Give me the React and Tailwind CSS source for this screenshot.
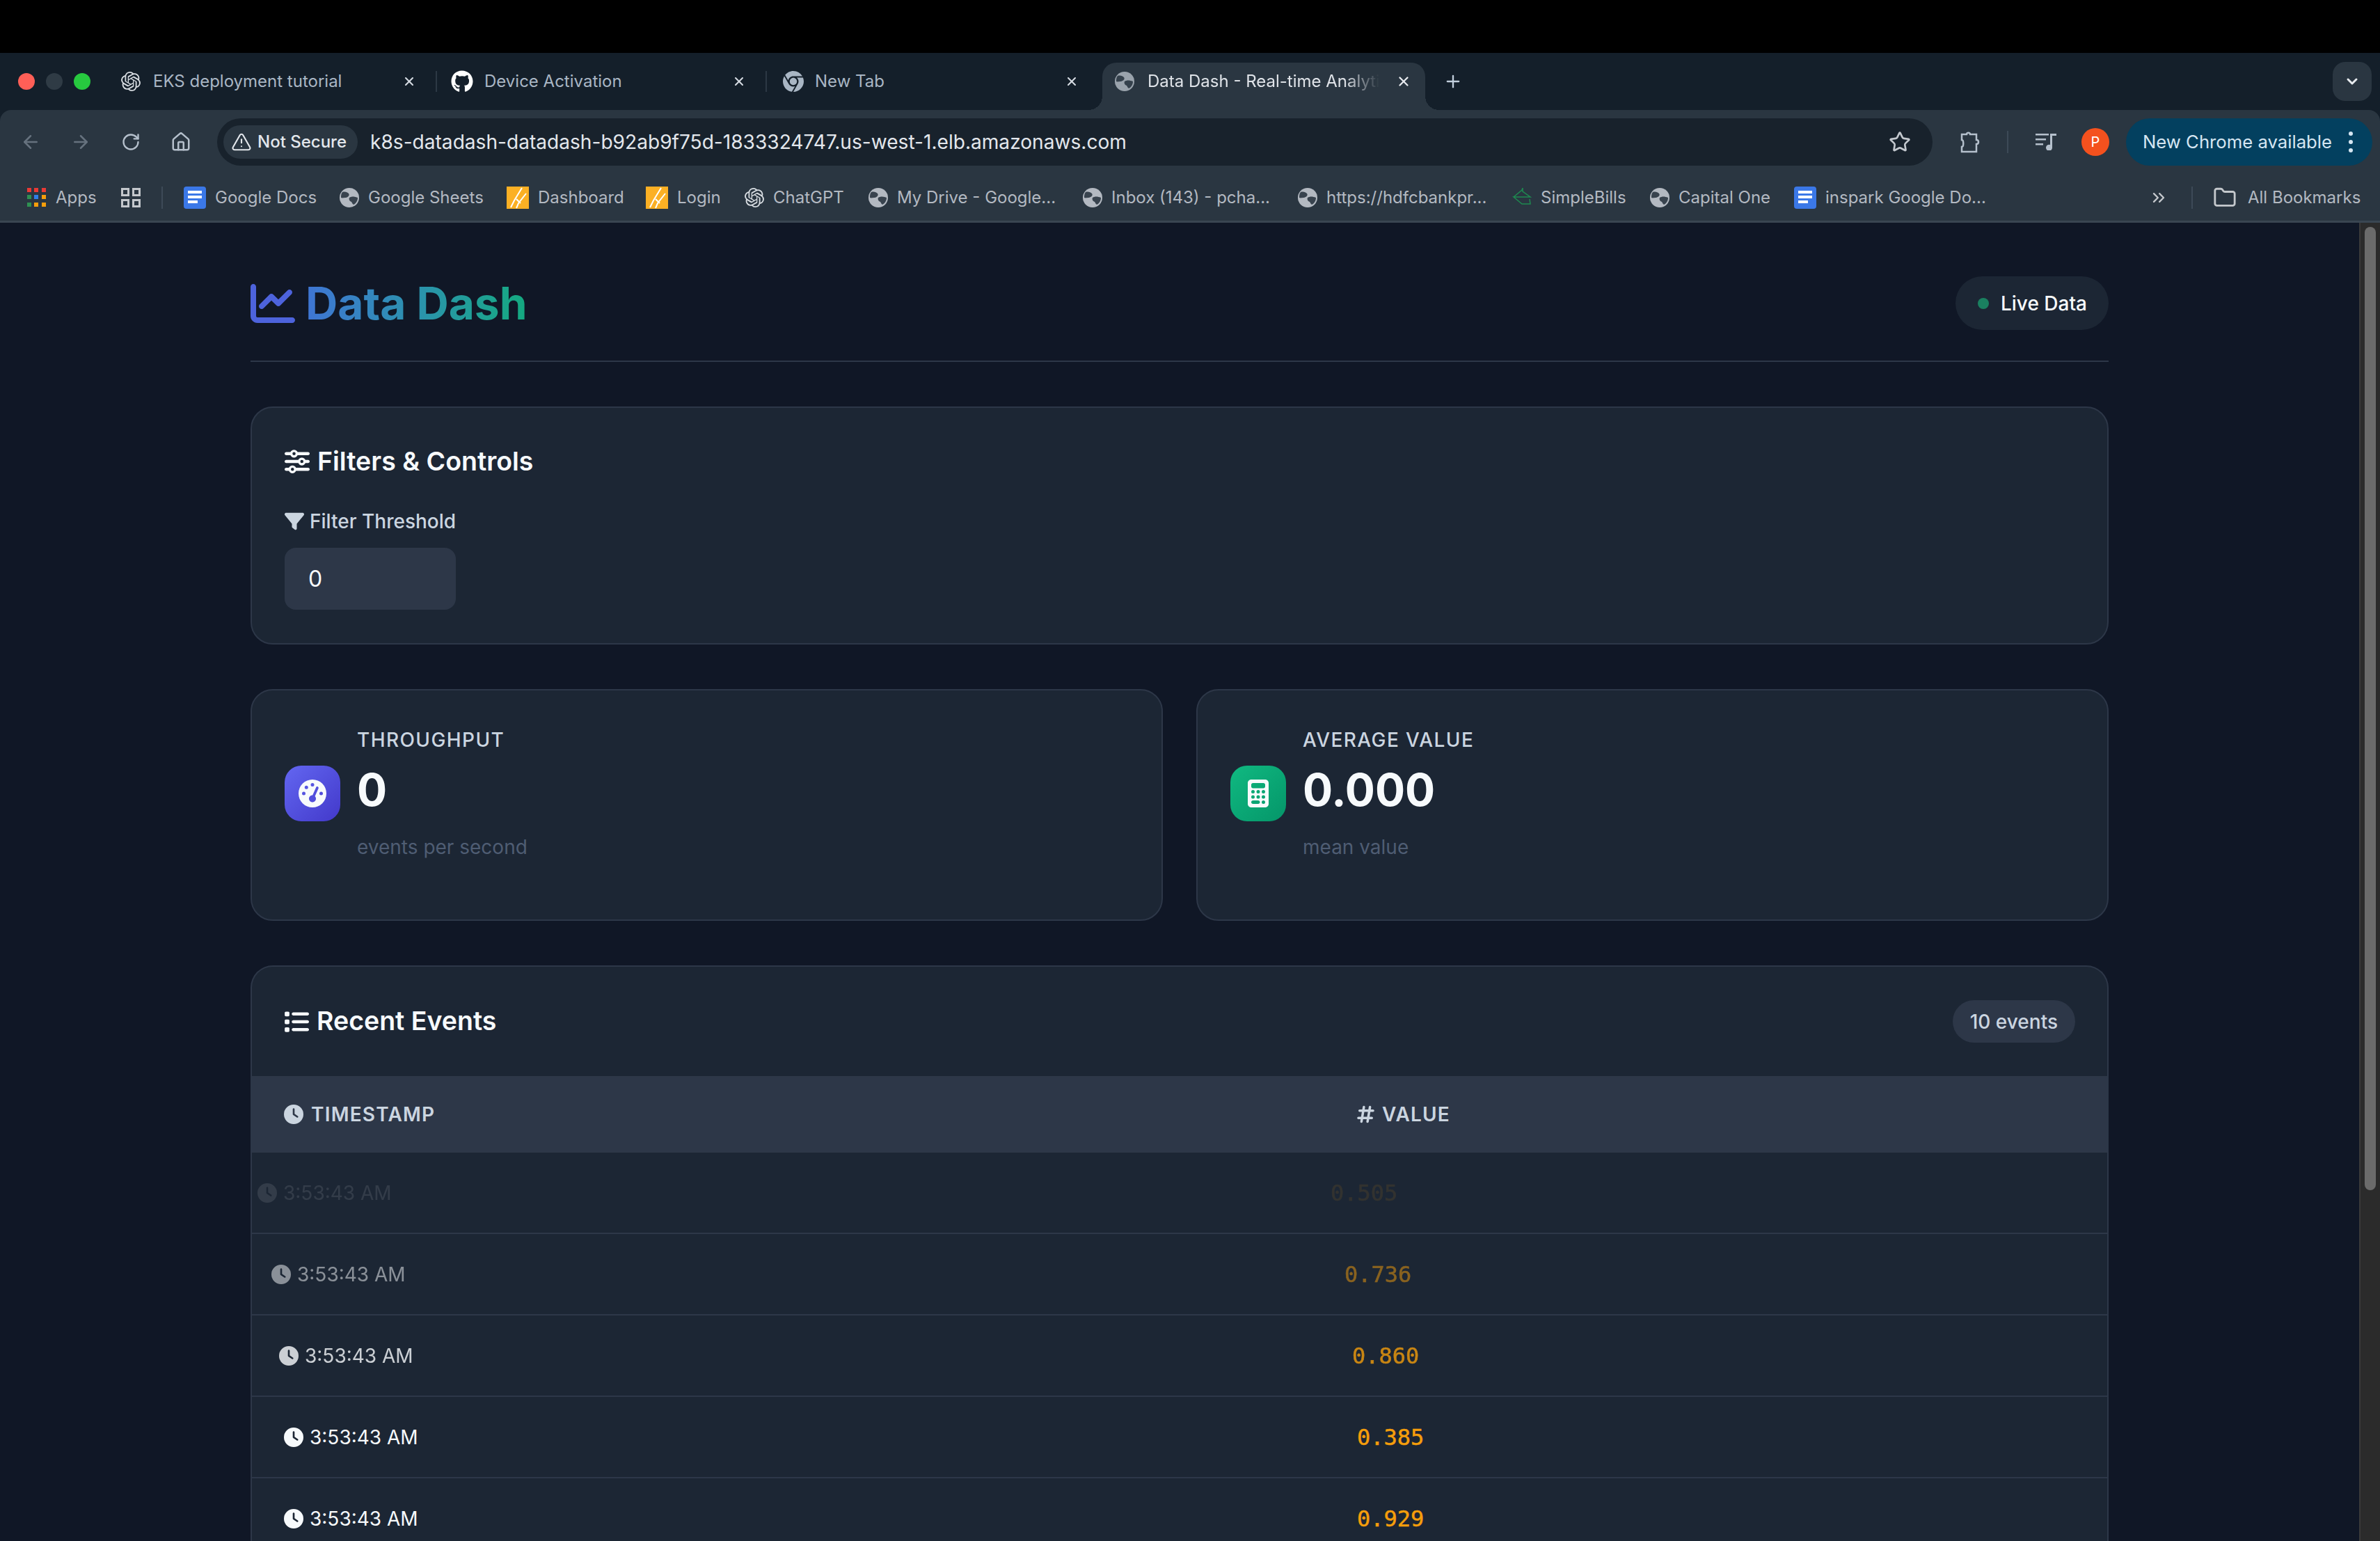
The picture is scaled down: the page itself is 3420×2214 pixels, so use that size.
import { ArrowLeft, ArrowRight, ChevronDown, ChevronsRight, Folder, House, Plus, RotateCw, Star, TriangleAlert, X } from 'lucide-react'
import { FaCalculator, FaChartLine, FaChrome, FaClock, FaFilter, FaGaugeHigh, FaGithub, FaHashtag, FaList, FaSliders } from 'react-icons/fa6'
import { SiOpenai } from 'react-icons/si'

function Globe({ className }) {
  return (
    <svg viewBox="0 0 28 28" className={className}>
      <circle cx="14" cy="14" r="14" fill="currentColor" />
      <path d="M4 6c4-1 7 0 9 2 2 3-1 5-4 6-3 0-5 1-7 0 0-3 0-6 2-8zM14 14c3-2 7-2 12 0 0 4-2 8-6 10-2-1-2-3-3-4-3-1-4-4-3-6z" fill="#2a3641" opacity="0.9" />
    </svg>
  )
}

function DocsIcon() {
  return (
    <div className="flex h-[32px] w-[32px] flex-none flex-col gap-[3px] rounded-[4px] bg-[#3b78e7] px-[6px] pt-[6px]">
      <div className="h-[4px] w-[20px] bg-white" />
      <div className="h-[4px] w-[20px] bg-white" />
      <div className="h-[4px] w-[14px] bg-white" />
    </div>
  )
}

function SunIcon() {
  return (
    <svg viewBox="0 0 32 32" className="h-[32px] w-[32px] flex-none">
      <rect width="32" height="32" fill="#fbb024" />
      <path d="M22 2 11 20l-5 10M28 10 17 24l-3 7M14 18l6 6" stroke="#fff" strokeWidth="2" fill="none" />
    </svg>
  )
}

function BillsIcon() {
  return (
    <svg viewBox="0 0 28 28" className="h-[28px] w-[28px] flex-none" fill="none" stroke="#1e8a50" strokeWidth="1.5">
      <path d="M2 13 14 3l1-3v5l11 8H2l12 10h12l-1-7M14 23h11" />
    </svg>
  )
}

function AppsIcon() {
  const colors = ['bg-[#ea3a35]', 'bg-[#ea3a35]', 'bg-[#ea3a35]', 'bg-[#2f9152]', 'bg-[#2f7fe8]', 'bg-[#f59e0b]', 'bg-[#2f9152]', 'bg-[#f59e0b]', 'bg-[#f59e0b]']
  return (
    <div className="grid h-[27px] w-[27px] flex-none grid-cols-3 gap-[4px]">
      {colors.map((c, i) => (
        <div key={i} className={`h-[6px] w-[6px] ${c}`} />
      ))}
    </div>
  )
}

function TabGroupsIcon() {
  return (
    <div className="grid h-[28px] w-[28px] flex-none grid-cols-2 gap-[4px]">
      {[0, 1, 2, 3].map((i) => (
        <div key={i} className="h-[12px] w-[12px] border-[3px] border-[#c4c8cc]" />
      ))}
    </div>
  )
}

function Tab({ icon, title, slot }) {
  return (
    <div className="flex h-[82px] w-[474px] flex-none items-center pl-[20px]">
      <div className={`flex flex-none items-center ${slot}`}>{icon}</div>
      <span className="min-w-0 flex-1 truncate text-[24px] text-[#a9b6c4]">{title}</span>
      <X className="ml-[18px] h-[20px] w-[20px] flex-none text-[#d5dbe2]" strokeWidth={2.5} />
      <div className="ml-[28px] h-[30px] w-[2px] flex-none bg-[#2c3844]" />
    </div>
  )
}

function TabBar() {
  return (
    <div className="flex h-[82px] flex-none items-center bg-[#141f2a]">
      <div className="flex w-[154px] flex-none gap-[16px] pl-[26px]">
        <div className="h-[24px] w-[24px] rounded-full bg-[#ff5f57]" />
        <div className="h-[24px] w-[24px] rounded-full bg-[#2f3b45]" />
        <div className="h-[24px] w-[24px] rounded-full bg-[#27c93f]" />
      </div>
      <Tab slot="w-[46px]" icon={<SiOpenai className="h-[28px] w-[28px] text-[#d8dde2]" />} title="EKS deployment tutorial" />
      <Tab slot="w-[48px]" icon={<FaGithub className="h-[32px] w-[32px] text-white" />} title="Device Activation" />
      <div className="flex h-[82px] w-[482px] flex-none items-center pl-[23px]">
        <div className="flex w-[46px] flex-none items-center">
          <FaChrome className="h-[30px] w-[30px] text-[#a9b6c4]" />
        </div>
        <span className="flex-1 text-[24px] text-[#a9b6c4]">New Tab</span>
        <X className="mr-[34px] h-[20px] w-[20px] flex-none text-[#d5dbe2]" strokeWidth={2.5} />
      </div>
      <div className="relative flex h-[68px] w-[464px] flex-none items-center self-end rounded-t-[20px] bg-[#2a3641] pb-[14px] pl-[18px]">
        <div className="absolute bottom-0 left-[-20px] h-[20px] w-[20px] bg-[radial-gradient(circle_at_0_0,transparent_20px,#2a3641_20px)]" />
        <div className="absolute bottom-0 right-[-20px] h-[20px] w-[20px] bg-[radial-gradient(circle_at_100%_0,transparent_20px,#2a3641_20px)]" />
        <Globe className="h-[28px] w-[28px] flex-none text-[#9aa3ac]" />
        <span className="ml-[19px] w-[333px] flex-none overflow-hidden whitespace-nowrap text-[24px] text-[#dfe3e8] [mask-image:linear-gradient(to_right,black_85%,transparent)]">
          Data Dash - Real-time Analytics
        </span>
        <X className="ml-[24px] h-[22px] w-[22px] flex-none text-[#e8ebef]" strokeWidth={2.5} />
      </div>
      <Plus className="ml-[26px] h-[28px] w-[28px] flex-none text-[#c2cfdd]" strokeWidth={2} />
      <div className="ml-auto mr-[12px] flex h-[56px] w-[56px] flex-none items-center justify-center rounded-[18px] bg-[#2a3641]">
        <ChevronDown className="h-[24px] w-[24px] text-[#e8ebef]" strokeWidth={3} />
      </div>
    </div>
  )
}

function Toolbar() {
  return (
    <div className="flex h-[92px] flex-none items-center rounded-t-[16px] bg-[#2a3641] pl-[8px]">
      <div className="flex w-[72px] flex-none justify-center"><ArrowLeft className="h-[30px] w-[30px] text-[#66727e]" /></div>
      <div className="flex w-[72px] flex-none justify-center"><ArrowRight className="h-[30px] w-[30px] text-[#66727e]" /></div>
      <div className="flex w-[72px] flex-none justify-center"><RotateCw className="h-[28px] w-[28px] text-[#b5c0cc]" /></div>
      <div className="flex w-[72px] flex-none justify-center"><House className="h-[30px] w-[30px] text-[#b5c0cc]" /></div>
      <div className="ml-[16px] flex h-[68px] w-[2465px] flex-none items-center rounded-full bg-[#18222c] pl-[9px] pr-[31px]">
        <div className="flex h-[48px] w-[193px] flex-none items-center rounded-full bg-[#2a3641] pl-[11px]">
          <TriangleAlert className="h-[30px] w-[30px] flex-none text-[#e3e7ec]" strokeWidth={1.7} />
          <span className="ml-[8px] whitespace-nowrap text-[24px] font-medium text-[#e3e7ec]">Not Secure</span>
        </div>
        <span className="ml-[18px] flex-1 text-[28.1px] text-[#e3e7ec]">k8s-datadash-datadash-b92ab9f75d-1833324747.us-west-1.elb.amazonaws.com</span>
        <Star className="h-[32px] w-[32px] flex-none text-[#c3c8ce]" strokeWidth={2} />
      </div>
      <svg viewBox="0 0 32 32" className="ml-[39px] h-[32px] w-[32px] flex-none" fill="none" stroke="#b5c0cc" strokeWidth="2.5">
        <path d="M3 5h7c0-3 5-3 5 0h9v8c4 0 4 6 0 6v11H3v-7c3 0 3-10 0-10z" />
      </svg>
      <div className="ml-[36px] h-[32px] w-[2px] flex-none bg-[#3d4a57]" />
      <svg viewBox="0 0 30 24" className="ml-[39px] h-[24px] w-[30px] flex-none" fill="#b5c0cc">
        <path d="M0 0h19v2.5H0zM0 7h15v2.5H0zM0 14h11v2.5H0zM21 0h9v3h-6v17a4.5 4.5 0 1 1-3-4z" />
      </svg>
      <div className="ml-[36px] flex h-[40px] w-[40px] flex-none items-center justify-center rounded-full bg-[#f4511e] text-[20px] text-white">P</div>
      <div className="ml-[24px] flex h-[68px] w-[354px] flex-none items-center justify-between rounded-full bg-[#03405f] pl-[24px] pr-[28px]">
        <span className="whitespace-nowrap text-[25.7px] text-[#d6e6f2]">New Chrome available</span>
        <div className="flex flex-col gap-[6px]">
          <div className="h-[6px] w-[6px] rounded-full bg-[#d6e6f2]" />
          <div className="h-[6px] w-[6px] rounded-full bg-[#d6e6f2]" />
          <div className="h-[6px] w-[6px] rounded-full bg-[#d6e6f2]" />
        </div>
      </div>
    </div>
  )
}

function Bookmark({ icon, label, className }) {
  return (
    <div className={`flex flex-none items-center gap-[13px] ${className}`}>
      {icon}
      <span className="whitespace-nowrap text-[24px] text-[#b3b9c1]">{label}</span>
    </div>
  )
}

function BookmarksBar() {
  const globe = <Globe className="h-[28px] w-[28px] flex-none text-[#b3b9c1]" />
  return (
    <div className="flex h-[70px] flex-none items-center border-b-[3px] border-[#3a4652] bg-[#2a3641] pl-[39px]">
      <AppsIcon />
      <span className="ml-[14px] w-[94px] flex-none text-[24px] text-[#b3b9c1]">Apps</span>
      <TabGroupsIcon />
      <div className="ml-[30px] mr-[30px] h-[32px] w-[2px] flex-none bg-[#3d4a57]" />
      <Bookmark className="w-[224px]" icon={<DocsIcon />} label="Google Docs" />
      <Bookmark className="w-[240px]" icon={globe} label="Google Sheets" />
      <Bookmark className="w-[200px]" icon={<SunIcon />} label="Dashboard" />
      <Bookmark className="w-[142px]" icon={<SunIcon />} label="Login" />
      <Bookmark className="w-[178px]" icon={<SiOpenai className="h-[28px] w-[28px] flex-none text-[#d8dde2]" />} label="ChatGPT" />
      <Bookmark className="w-[308px]" icon={globe} label="My Drive - Google..." />
      <Bookmark className="w-[309px]" icon={globe} label="Inbox (143) - pcha..." />
      <Bookmark className="w-[308px]" icon={globe} label="https://hdfcbankpr..." />
      <Bookmark className="w-[198px]" icon={<BillsIcon />} label="SimpleBills" />
      <Bookmark className="w-[207px]" icon={globe} label="Capital One" />
      <Bookmark className="w-[510px]" icon={<DocsIcon />} label="inspark Google Do..." />
      <ChevronsRight className="h-[28px] w-[28px] flex-none text-[#c4c8cc]" strokeWidth={2} />
      <div className="ml-[33px] h-[32px] w-[2px] flex-none bg-[#3d4a57]" />
      <Folder className="ml-[29px] h-[34px] w-[34px] flex-none text-[#c4c8cc]" strokeWidth={2} />
      <span className="ml-[16px] whitespace-nowrap text-[24px] text-[#b3b9c1]">All Bookmarks</span>
    </div>
  )
}

function StatCard({ icon, iconClass, label, value, sub }) {
  return (
    <div className="rounded-[32px] border-2 border-[#2d3748] bg-[#1c2634] pb-[84px] pl-[47px] pr-[48px] pt-[50px]">
      <div className="flex items-center gap-[24px]">
        <div className={`flex h-[80px] w-[80px] flex-none items-center justify-center rounded-[24px] bg-linear-to-br ${iconClass}`}>
          {icon}
        </div>
        <div>
          <div className="text-[28px] font-medium leading-[43px] tracking-[1.4px] text-[#cbd5e0]">{label}</div>
          <div className="mt-[11px] text-[64px] font-bold leading-[77px] text-[#f7fafc]">{value}</div>
          <div className="mt-[24px] text-[28px] leading-[40px] text-[#4f5d73]">{sub}</div>
        </div>
      </div>
    </div>
  )
}

const events = [
  { value: '0.505', rowClass: 'opacity-10 -translate-x-[38px]' },
  { value: '0.736', rowClass: 'opacity-50 -translate-x-[18px]' },
  { value: '0.860', rowClass: 'opacity-80 -translate-x-[7px]' },
  { value: '0.385', rowClass: '' },
  { value: '0.929', rowClass: '' },
  { value: '0.412', rowClass: '' },
]

function EventsCard() {
  return (
    <div className="rounded-t-[32px] border-2 border-b-0 border-[#2d3748] bg-[#1c2634]">
      <div className="flex h-[157px] items-center justify-between px-[46px]">
        <h3 className="flex items-center gap-[11px] text-[37.5px] font-semibold text-[#f7fafc]">
          <FaList className="h-[36px] w-[36px]" />
          Recent Events
        </h3>
        <span className="flex h-[61px] items-center rounded-full bg-[#2d3748] px-[25px] text-[28px] font-medium text-[#cbd5e0]">10 events</span>
      </div>
      <div className="grid h-[110px] grid-cols-[1540px_1fr] items-center bg-[#2d3748] text-[28px] font-semibold uppercase tracking-[1.2px] text-[#cbd5e0]">
        <div className="flex items-center gap-[11px] pl-[46px]">
          <FaClock className="h-[28px] w-[28px]" />
          Timestamp
        </div>
        <div className="flex items-center gap-[11px] pl-[48px]">
          <FaHashtag className="h-[28px] w-[25px]" />
          Value
        </div>
      </div>
      {events.map((e, i) => (
        <div key={i} className="grid h-[117px] grid-cols-[1540px_1fr] items-center border-b-2 border-[#2d3748]">
          <div className={`flex items-center gap-[9px] pl-[46px] text-[28px] text-[#f7fafc] ${e.rowClass}`}>
            <FaClock className="h-[28px] w-[28px]" />
            3:53:43 AM
          </div>
          <div className={`pl-[48px] font-['DejaVu_Sans_Mono',monospace] text-[32px] text-[#f59e0b] [-webkit-text-stroke:0.5px] ${e.rowClass}`}>{e.value}</div>
        </div>
      ))}
    </div>
  )
}

export default function App() {
  return (
    <div className="flex h-[2214px] w-[3420px] flex-col overflow-hidden bg-black font-['Inter',sans-serif]">
      <div className="h-[76px] flex-none bg-black" />
      <div className="flex-none bg-[#141f2a]">
        <TabBar />
        <Toolbar />
        <BookmarksBar />
      </div>
      <div className="flex min-h-0 flex-1 bg-[#101726]">
        <div className="min-w-0 flex-1 overflow-hidden px-[360px]">
          <header className="mb-[64px] flex items-center justify-between border-b-2 border-[#2d3748] pb-[44px] pt-[77px]">
            <h1 className="flex items-center gap-[15px] text-[64px] font-bold leading-[77px]">
              <FaChartLine className="h-[64px] w-[64px] text-[#4d63dc]" />
              <span className="bg-linear-to-r from-[#3f75d4] to-[#14a97f] bg-clip-text text-transparent">Data Dash</span>
            </h1>
            <div className="flex h-[77px] items-center gap-[17px] rounded-full bg-[#1c2634] pl-[32px] pr-[31px] text-[28px] font-medium text-[#f7fafc]">
              <div className="h-[16px] w-[16px] rounded-full bg-[#1a8060]" />
              Live Data
            </div>
          </header>

          <section className="mb-[64px] rounded-[32px] border-2 border-[#2d3748] bg-[#1c2634] px-[47px] pb-[48px] pt-[48px]">
            <h3 className="flex h-[58px] items-center gap-[11px] text-[37.5px] font-semibold text-[#f7fafc]">
              <FaSliders className="h-[36px] w-[36px]" />
              Filters &amp; Controls
            </h3>
            <label className="mt-[37px] flex h-[40px] items-center gap-[8px] text-[28px] font-medium text-[#cbd5e0]">
              <FaFilter className="h-[28px] w-[28px]" />
              Filter Threshold
            </label>
            <div className="mt-[18px] flex h-[89px] w-[246px] items-center rounded-[16px] bg-[#2d3748] pl-[34px] text-[32px] text-[#f7fafc]">0</div>
          </section>

          <div className="mb-[64px] grid grid-cols-2 gap-[48px]">
            <StatCard
              icon={<FaGaugeHigh className="h-[40px] w-[40px] text-[#f7fafc]" />}
              iconClass="from-[#6366f1] to-[#4338ca]"
              label="THROUGHPUT"
              value="0"
              sub="events per second"
            />
            <StatCard
              icon={<FaCalculator className="h-[40px] w-[40px] text-[#f7fafc]" />}
              iconClass="from-[#10b981] to-[#059669]"
              label="AVERAGE VALUE"
              value="0.000"
              sub="mean value"
            />
          </div>

          <EventsCard />
        </div>
        <div className="w-[30px] flex-none border-l-2 border-[#3a3a3a] bg-[#2b2b2b] pl-[6px] pt-[6px]">
          <div className="h-[1384px] w-[16px] rounded-full bg-[#6b6b6b]" />
        </div>
      </div>
    </div>
  )
}
